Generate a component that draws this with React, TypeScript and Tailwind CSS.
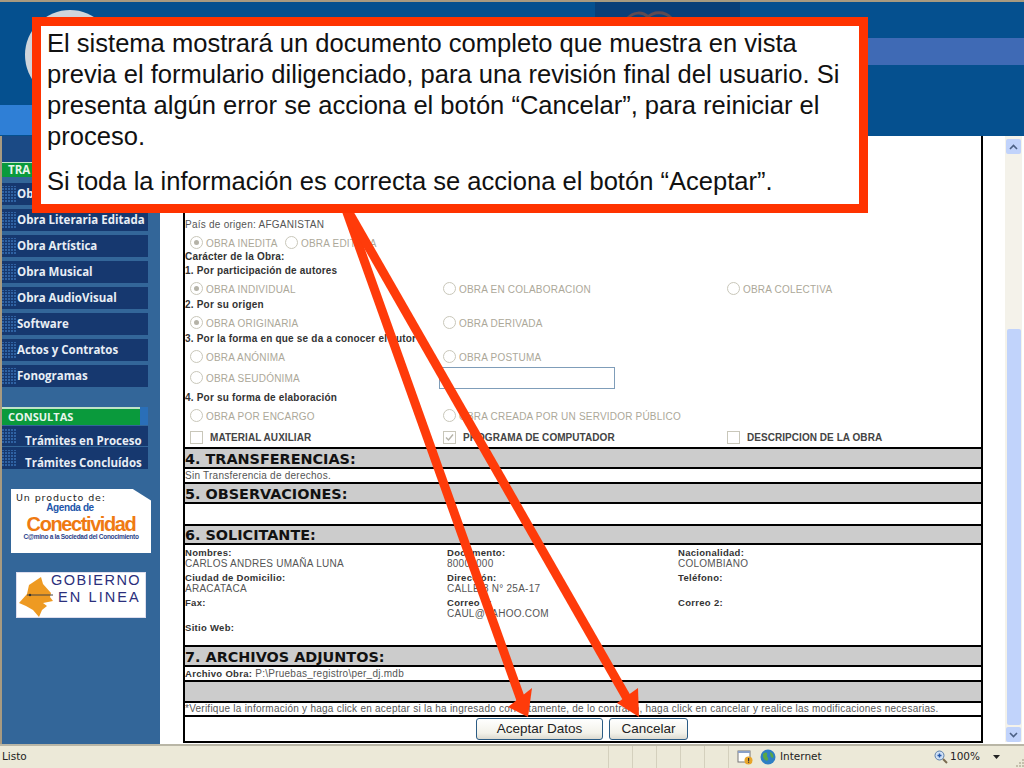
import React from "react";

const menu = ["Ob", "Obra Literaria Editada", "Obra Artística", "Obra Musical", "Obra AudioVisual", "Software", "Actos y Contratos", "Fonogramas"];

function Dots() {
  return <span className="w-[14px] self-stretch my-[3px] shrink-0 bg-[#2f62a3] bg-[repeating-linear-gradient(90deg,transparent_0_2px,#16386f_2px_3px),repeating-linear-gradient(0deg,transparent_0_2px,#16386f_2px_3px)]" />;
}

function MenuItem({ label }: { label: string }) {
  return (
    <div className="h-[22px] mb-[4px] w-[146px] bg-[#16386f] flex items-center overflow-hidden">
      <Dots />
      <span className="pl-[1px] font-['Open_Sans',sans-serif] font-bold text-[11.5px] text-[#e8eef5] whitespace-nowrap">{label}</span>
    </div>
  );
}

function SubItem({ label, h }: { label: string; h: string }) {
  return (
    <div className={`${h} w-[146px] bg-[#16386f] flex items-center overflow-hidden`}>
      <Dots />
      <span className="pl-[9px] pt-[9px] font-['Open_Sans',sans-serif] font-bold text-[11.5px] leading-[14px] text-[#e8eef5] whitespace-nowrap">{label}</span>
    </div>
  );
}

function Radio({ on }: { on?: boolean }) {
  return (
    <span className="w-[13px] h-[13px] -mt-[2px] rounded-full border border-[#c9c7ba] bg-white flex items-center justify-center shrink-0">
      {on && <span className="w-[5px] h-[5px] rounded-full bg-[#b5b3a8]" />}
    </span>
  );
}

function Opt({ label, on, w, pl = "pl-0" }: { label: string; on?: boolean; w: string; pl?: string }) {
  return (
    <div className={`${w} ${pl} flex items-start gap-[3px] shrink-0`}>
      <Radio on={on} />
      <span className="text-[#aca899] text-[10px] leading-[12px] tracking-[0.2px] whitespace-nowrap">{label}</span>
    </div>
  );
}

function Check({ label, on, w, pl = "pl-0" }: { label: string; on?: boolean; w: string; pl?: string }) {
  return (
    <div className={`${w} ${pl} flex items-start gap-[7px] shrink-0`}>
      <span className="w-[13px] h-[13px] -mt-[1px] border border-[#c9c7ba] bg-white flex items-center justify-center shrink-0">
        {on && (
          <svg viewBox="0 0 11 11" className="w-[11px] h-[11px]">
            <path d="M2 5.5 L4.5 8 L9 2.5" fill="none" stroke="#b5b3a8" strokeWidth="1.4" />
          </svg>
        )}
      </span>
      <span className="text-[#444] font-bold text-[10px] leading-[12px] tracking-[0.05px] whitespace-nowrap">{label}</span>
    </div>
  );
}

function Row({ h, children }: { h: string; children: React.ReactNode }) {
  return <div className={`${h} flex items-start`}>{children}</div>;
}

function FormLbl({ children }: { children: React.ReactNode }) {
  return <span className="text-[#333] font-bold text-[10px] leading-[12px] tracking-[0.2px] whitespace-nowrap">{children}</span>;
}

function Lbl({ children }: { children: React.ReactNode }) {
  return <span className="text-[#333] font-bold text-[9.5px] leading-[12px] tracking-[0.3px] whitespace-nowrap">{children}</span>;
}

function Val({ children }: { children: React.ReactNode }) {
  return <span className="text-[#555] text-[10px] leading-[12px] tracking-[0.25px] whitespace-nowrap">{children}</span>;
}

function Section({ title, h }: { title: string; h: string }) {
  return (
    <div className={`${h} bg-[#cccccc] border-b-2 border-black flex items-center pt-[1px] font-['DejaVu_Sans',sans-serif] font-bold text-[14.4px] leading-[16px] text-[#111] whitespace-nowrap`}>
      {title}
    </div>
  );
}

function SolRow({ h, a, b, c, kind }: { h: string; a?: string; b?: string; c?: string; kind: "l" | "v" }) {
  const T = kind === "l" ? Lbl : Val;
  return (
    <div className={`${h} flex items-start leading-[12px]`}>
      <div className="w-[262px] shrink-0 leading-[12px]"><T>{a}</T></div>
      <div className="w-[231px] shrink-0 leading-[12px]"><T>{b}</T></div>
      <div className="leading-[12px]"><T>{c}</T></div>
    </div>
  );
}

function XpButton({ label, w }: { label: string; w: string }) {
  return (
    <button className={`${w} h-[22px] rounded-[3px] border border-[#2b5c85] bg-[linear-gradient(180deg,#ffffff,#f3f2ea_70%,#dcdad0)] text-[13.5px] text-[#222] flex items-center justify-center`}>
      {label}
    </button>
  );
}

export default function App() {
  return (
    <div className="relative w-[1024px] h-[768px] overflow-hidden bg-white flex flex-col font-['Liberation_Sans',Arial,sans-serif]">
      <div className="h-[2px] bg-[#a89a80] shrink-0" />

      {/* header */}
      <header className="relative h-[134px] shrink-0 bg-[#05508f] flex flex-col overflow-hidden">
        <div className="h-[36px] shrink-0" />
        <div className="h-[27px] w-[300px] self-end shrink-0 bg-[#3f6ab5]" />
        <div className="h-[40px] shrink-0" />
        <div className="h-[30px] w-[170px] shrink-0 bg-[#2f7fd6]" />
        <div className="absolute left-[25px] top-[8px] w-[90px] h-[90px] rounded-full bg-[#cfd5dc]" />
        <svg className="absolute left-[595px] top-0 w-[145px] h-[16px]" viewBox="0 0 145 16">
          <rect width="145" height="16" fill="#0a3f78" />
          <path d="M33 16 C38 10 48 9 54 16 M52 16 C58 9 70 9 76 16" fill="none" stroke="#5d4a52" strokeWidth="3" />
        </svg>
      </header>

      <div className="flex h-[608px] shrink-0">
        <div className="w-[2px] bg-[#a89a80] shrink-0" />
        {/* sidebar */}
        <aside className="w-[158px] shrink-0 bg-[#336699] flex flex-col">
          <div className="h-[26px] bg-[#1b4a85] shrink-0" />
          <div className="h-[15px] w-[146px] bg-[#0a9a3c] border-t border-[#bfe3c8] flex items-center pl-[6px] mb-[6px] shrink-0 font-['Open_Sans',sans-serif] font-bold text-[11.5px] text-[#e8f5ec]">
            TRA
          </div>
          {menu.map((m) => <MenuItem key={m} label={m} />)}
          <div className="h-[16px] shrink-0" />
          <div className="h-[18px] w-[146px] flex shrink-0 mb-[1px]">
            <div className="w-[138px] bg-[#0a9a3c] border-t-2 border-[#bfe3c8] flex items-center pl-[6px] font-['Open_Sans',sans-serif] font-bold text-[11px] text-[#e8f5ec]">CONSULTAS</div>
            <div className="w-[8px] bg-[#2a6fb8]" />
          </div>
          <SubItem label="Trámites en Proceso" h="h-[20px] mb-[1px]" />
          <SubItem label="Trámites Concluídos" h="h-[22px]" />

          {/* logo 1 */}
          <div className="ml-[9px] mt-[20px] w-[140px] h-[64px] bg-white [clip-path:polygon(0_0,87%_0,100%_18%,100%_100%,0_100%)] flex flex-col items-center shrink-0">
            <div className="self-start pl-[5px] pt-[3px] font-['DejaVu_Sans',sans-serif] text-[9.5px] leading-[11px] tracking-[0.9px] text-[#222] whitespace-nowrap">Un producto de:</div>
            <div className="font-bold text-[10px] leading-[10px] tracking-[-0.4px] text-[#2255aa] -ml-[22px]">Agenda de</div>
            <div className="mt-[1px] font-bold text-[20px] leading-[20px] tracking-[-1.4px] text-[#ef7a12] whitespace-nowrap">Conectividad</div>
            <div className="-mt-[1px] font-bold text-[6.5px] leading-[8px] tracking-[-0.3px] text-[#2a3f8a] whitespace-nowrap">C@mino a la Sociedad del Conocimiento</div>
          </div>

          {/* logo 2 */}
          <div className="ml-[14px] mt-[19px] w-[130px] h-[46px] bg-white border border-[#dde] flex items-center shrink-0">
            <svg viewBox="0 0 36 46" className="w-[36px] h-[46px] shrink-0">
              <path d="M2 31 L10 22 L12 13 L24 5 L26 12 L34 21 L33 25 L36 29 L26 31 L30 34 L25 38 L22 45 L16 38 L9 34 Z" fill="#ee9a22" />
              <path d="M10 23 L36 23" stroke="#444" strokeWidth="1" />
              <circle cx="13" cy="23" r="1.2" fill="#333" />
            </svg>
            <div className="flex flex-col mb-[13px]">
              <span className="text-[14.5px] leading-[17px] tracking-[1.5px] text-[#2b2f7c] whitespace-nowrap -ml-[2px]">GOBIERNO</span>
              <span className="text-[14.5px] leading-[17px] tracking-[2.1px] text-[#2b2f7c] whitespace-nowrap ml-[5px]">EN LINEA</span>
            </div>
          </div>
        </aside>

        {/* main */}
        <main className="w-[844px] shrink-0 flex flex-col pl-[23px]">
          <div className="w-[800px] h-[607px] border-x-2 border-b-2 border-black flex flex-col">
            <div className="h-[83px] shrink-0" />
            <Row h="h-[19px]"><Val>País de origen: AFGANISTAN</Val></Row>
            <Row h="h-[13px]">
              <div className="pl-[5px] flex"><Opt label="OBRA INEDITA" on w="w-[95px]" /><Opt label="OBRA EDITADA" w="w-[100px]" /></div>
            </Row>
            <Row h="h-[14px]"><FormLbl>Carácter de la Obra:</FormLbl></Row>
            <Row h="h-[19px]"><FormLbl>1. Por participación de autores</FormLbl></Row>
            <Row h="h-[15px]">
              <Opt label="OBRA INDIVIDUAL" on w="w-[258px]" pl="pl-[5px]" />
              <Opt label="OBRA EN COLABORACION" w="w-[284px]" />
              <Opt label="OBRA COLECTIVA" w="w-[200px]" />
            </Row>
            <Row h="h-[19px]"><FormLbl>2. Por su origen</FormLbl></Row>
            <Row h="h-[15px]">
              <Opt label="OBRA ORIGINARIA" on w="w-[258px]" pl="pl-[5px]" />
              <Opt label="OBRA DERIVADA" w="w-[284px]" />
            </Row>
            <Row h="h-[19px]"><FormLbl>3. Por la forma en que se da a conocer el autor</FormLbl></Row>
            <Row h="h-[21px]">
              <Opt label="OBRA ANÓNIMA" w="w-[258px]" pl="pl-[5px]" />
              <Opt label="OBRA POSTUMA" w="w-[284px]" />
            </Row>
            <Row h="h-[19px]">
              <Opt label="OBRA SEUDÓNIMA" w="w-[254px]" pl="pl-[5px]" />
              <div className="w-[176px] h-[22px] -mt-[6px] border border-[#7f9db9] bg-white shrink-0" />
            </Row>
            <Row h="h-[19px]"><FormLbl>4. Por su forma de elaboración</FormLbl></Row>
            <Row h="h-[21px]">
              <Opt label="OBRA POR ENCARGO" w="w-[258px]" pl="pl-[5px]" />
              <Opt label="OBRA CREADA POR UN SERVIDOR PÚBLICO" w="w-[284px]" />
            </Row>
            <Row h="h-[15px]">
              <Check label="MATERIAL AUXILIAR" w="w-[258px]" pl="pl-[5px]" />
              <Check label="PROGRAMA DE COMPUTADOR" on w="w-[284px]" />
              <Check label="DESCRIPCION DE LA OBRA" w="w-[220px]" />
            </Row>

            <div className="h-[2px] bg-black shrink-0" />
            <Section title="4. TRANSFERENCIAS:" h="h-[20px]" />
            <div className="h-[15px] border-b-2 border-black flex items-center"><Val>Sin Transferencia de derechos.</Val></div>
            <Section title="5. OBSERVACIONES:" h="h-[20px]" />
            <div className="h-[22px] border-b-2 border-black" />
            <Section title="6. SOLICITANTE:" h="h-[19px]" />

            <div className="h-[102px] border-b-2 border-black flex flex-col">
              <SolRow h="h-[11px]" kind="l" a="Nombres:" b="Documento:" c="Nacionalidad:" />
              <SolRow h="h-[14px]" kind="v" a="CARLOS ANDRES UMAÑA LUNA" b="80000000" c="COLOMBIANO" />
              <SolRow h="h-[11px]" kind="l" a="Ciudad de Domicilio:" b="Dirección:" c="Teléfono:" />
              <SolRow h="h-[14px]" kind="v" a="ARACATACA" b="CALLE 8 N° 25A-17" />
              <SolRow h="h-[11px]" kind="l" a="Fax:" b="Correo 1:" c="Correo 2:" />
              <SolRow h="h-[14px]" kind="v" b="CAUL@YAHOO.COM" />
              <SolRow h="h-[11px]" kind="l" a="Sitio Web:" />
            </div>

            <Section title="7. ARCHIVOS ADJUNTOS:" h="h-[20px]" />
            <div className="h-[15px] border-b-2 border-black flex items-center gap-[3px]"><Lbl>Archivo Obra:</Lbl><Val>P:\Pruebas_registro\per_dj.mdb</Val></div>
            <div className="h-[21px] bg-[#cccccc] border-b-2 border-black" />
            <div className="h-[14px] border-b-2 border-black flex items-center"><Val>*Verifique la información y haga click en aceptar si la ha ingresado correctamente, de lo contrario, haga click en cancelar y realice las modificaciones necesarias.</Val></div>
            <div className="flex-1 flex items-center justify-center gap-[6px] pr-[2px]">
              <XpButton label="Aceptar Datos" w="w-[127px]" />
              <XpButton label="Cancelar" w="w-[79px]" />
            </div>
          </div>
        </main>

        {/* scrollbar */}
        <div className="w-[20px] shrink-0 flex flex-col bg-white pl-[1px]">
          <div className="w-[17px] bg-[#f4f2ea] flex flex-col items-center h-[606px]">
            <div className="w-[15px] h-[15px] mt-[3px] rounded-[2px] bg-[#c1d3fb] flex items-center justify-center">
              <svg viewBox="0 0 9 6" className="w-[9px] h-[6px]"><path d="M1 5 L4.5 1.5 L8 5" fill="none" stroke="#4d6185" strokeWidth="1.6" /></svg>
            </div>
            <div className="h-[175px] shrink-0" />
            <div className="w-[14px] h-[396px] rounded-[2px] bg-[#c1d3fb] shrink-0" />
            <div className="w-[15px] h-[15px] mt-[2px] rounded-[2px] bg-[#c1d3fb] flex items-center justify-center">
              <svg viewBox="0 0 9 6" className="w-[9px] h-[6px]"><path d="M1 1 L4.5 4.5 L8 1" fill="none" stroke="#4d6185" strokeWidth="1.6" /></svg>
            </div>
          </div>
        </div>
      </div>

      {/* status bar */}
      <footer className="flex-1 bg-[#ece9d8] border-t-2 border-[#b9b6a6] flex items-center text-[10.5px] text-[#222] font-['DejaVu_Sans',sans-serif]">
        <span className="pl-[2px] w-[613px]">Listo</span>
        {[0, 1, 2, 3, 4].map((i) => <span key={i} className="w-[24px] h-full border-l border-[#d4d0bd] shrink-0" />)}
        <span className="h-full border-l border-[#d4d0bd] w-[9px] shrink-0" />
        <svg viewBox="0 0 16 16" className="w-[16px] h-[16px] shrink-0">
          <rect x="1" y="2" width="12" height="11" fill="#fff" stroke="#777" />
          <rect x="1" y="2" width="12" height="2" fill="#8aa0c8" />
          <circle cx="11.5" cy="11.5" r="4" fill="#e8a52a" />
          <rect x="11" y="9" width="1.2" height="3" fill="#333" />
          <rect x="11" y="12.6" width="1.2" height="1.2" fill="#333" />
        </svg>
        <svg viewBox="0 0 16 16" className="w-[16px] h-[16px] ml-[7px] shrink-0">
          <circle cx="8" cy="8" r="7.5" fill="#2f7fc4" />
          <path d="M3 5 C6 2 8 4 7 6 C6 8 9 8 8 11 C6 13 4 10 3 8 Z M10 3 C13 4 14 7 13 9 C11 9 10 6 10 3 Z" fill="#5ba845" />
        </svg>
        <span className="ml-[4px] w-[142px] shrink-0">Internet</span>
        <svg viewBox="0 0 14 14" className="w-[14px] h-[14px] ml-[12px] shrink-0">
          <circle cx="5.5" cy="5.5" r="4.5" fill="#cfe0f5" stroke="#5b7fa8" />
          <path d="M3.5 5.5 H7.5 M5.5 3.5 V7.5" stroke="#2457a8" strokeWidth="1.4" />
          <path d="M9 9 L13 13" stroke="#7a6a50" strokeWidth="2" />
        </svg>
        <span className="ml-[2px]">100%</span>
        <svg viewBox="0 0 7 4" className="w-[7px] h-[4px] ml-[13px] shrink-0"><path d="M0 0 H7 L3.5 4 Z" fill="#222" /></svg>
        <svg viewBox="0 0 9 9" className="w-[9px] h-[9px] ml-[15px] mt-[10px] shrink-0" fill="#c4c0ac">
          <rect x="7" y="1" width="2" height="2" /><rect x="4" y="4" width="2" height="2" /><rect x="7" y="4" width="2" height="2" />
          <rect x="1" y="7" width="2" height="2" /><rect x="4" y="7" width="2" height="2" /><rect x="7" y="7" width="2" height="2" />
        </svg>
      </footer>

      {/* arrows overlay */}
      <svg className="absolute left-0 top-0 w-[1024px] h-[768px] pointer-events-none" viewBox="0 0 1024 768">
        <path d="M344 204 L521 700" stroke="#ff3b0a" strokeWidth="9" fill="none" />
        <path d="M344 204 L628 700" stroke="#ff3b0a" strokeWidth="9" fill="none" />
        <path d="M528 717 L508 707 L532 688 Z" fill="#ff3b0a" />
        <path d="M639 717 L617 703 L638 688 Z" fill="#ff3b0a" />
      </svg>

      {/* callout overlay */}
      <div className="absolute left-[32px] top-[17px] w-[836px] h-[196px] border-[9px] border-[#ff3300] bg-white pl-[6px] pr-[4px] pt-[2px] text-[25.55px] leading-[31px] text-[#111]">
        <p>El sistema mostrará un documento completo que muestra en vista previa el formulario diligenciado, para una revisión final del usuario. Si presenta algún error se acciona el botón “Cancelar”, para reiniciar el proceso.</p>
        <p className="mt-[14px]">Si toda la información es correcta se acciona el botón “Aceptar”.</p>
      </div>
    </div>
  );
}
